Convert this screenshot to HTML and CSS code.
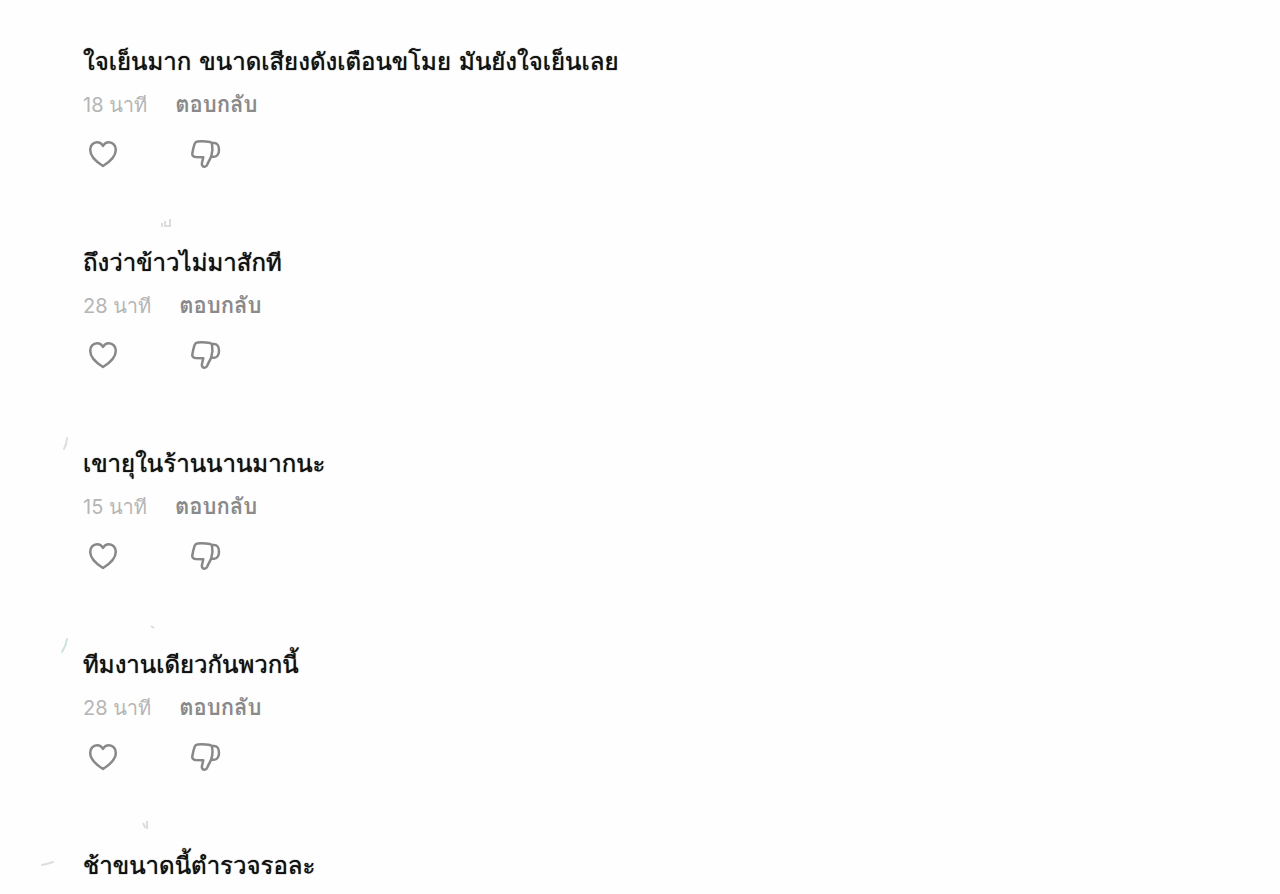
FILE: index.html
```html
<!DOCTYPE html>
<html lang="th">
<head>
<meta charset="utf-8">
<meta name="viewport" content="width=device-width, initial-scale=1">
<title>ความคิดเห็น</title>
<link rel="stylesheet" href="styles.css">
</head>
<body>
<svg class="symbols" aria-hidden="true">
  <symbol id="heart" viewBox="0 0 32 32"><path d="M16 28C12 25.500 3.200 19.500 3.200 11.700C3.200 7.500 6.200 4.300 10 4.300C12.700 4.300 14.800 5.800 16 8C17.200 5.800 19.300 4.300 22 4.300C25.800 4.300 28.800 7.500 28.800 11.700C28.800 19.500 20 25.500 16 28Z"/></symbol>
  <symbol id="dislike" viewBox="0 0 32 32"><path d="M8.500 3.500Q15 3 21 4Q22.700 4.300 23 6C23.800 10 23.500 14.500 22.300 18C21.300 21 19.500 23.500 18.300 26.500C17.500 28.300 16.500 29 15.200 28.800C13.300 28.500 12.500 26.700 13 24.700L14.300 19.300L6.500 19C4.300 18.800 3 17.500 3.300 15.500Q4 10.500 5.600 5.800Q6.300 3.700 8.500 3.500Z"/><path d="M22.800 5H25C28 5 30 7.700 30 11.700C30 16 28 18.700 25 18.700H22.200"/></symbol>
</svg>
<main class="comments">
  <article class="comment">
    <div class="avatar"></div>
    <div class="body">
      <div class="author"></div>
      <p class="text">ใจเย็นมาก ขนาดเสียงดังเตือนขโมย มันยังใจเย็นเลย</p>
      <div class="meta"><time>18 นาที</time><button class="reply" type="button">ตอบกลับ</button></div>
      <div class="actions"><button class="icon" type="button" aria-label="ถูกใจ"><svg><use href="#heart"/></svg></button><button class="icon" type="button" aria-label="ไม่ชอบ"><svg><use href="#dislike"/></svg></button></div>
    </div>
  </article>
  <article class="comment">
    <div class="avatar"></div>
    <div class="body">
      <div class="author"><svg class="trace" viewBox="0 0 100 20"><path d="M79 10v4M82 8v5h5V6"/></svg></div>
      <p class="text">ถึงว่าข้าวไม่มาสักที</p>
      <div class="meta"><time>28 นาที</time><button class="reply" type="button">ตอบกลับ</button></div>
      <div class="actions"><button class="icon" type="button" aria-label="ถูกใจ"><svg><use href="#heart"/></svg></button><button class="icon" type="button" aria-label="ไม่ชอบ"><svg><use href="#dislike"/></svg></button></div>
    </div>
  </article>
  <article class="comment">
    <div class="avatar"><svg viewBox="0 0 56 56"><path d="M54 24Q54 30 51 35"/></svg></div>
    <div class="body">
      <div class="author"></div>
      <p class="text">เขายุในร้านนานมากนะ</p>
      <div class="meta"><time>15 นาที</time><button class="reply" type="button">ตอบกลับ</button></div>
      <div class="actions"><button class="icon" type="button" aria-label="ถูกใจ"><svg><use href="#heart"/></svg></button><button class="icon" type="button" aria-label="ไม่ชอบ"><svg><use href="#dislike"/></svg></button></div>
    </div>
  </article>
  <article class="comment">
    <div class="avatar"><svg class="mint" viewBox="0 0 56 56"><path d="M54 24Q53 31 49 37"/></svg></div>
    <div class="body">
      <div class="author"><svg class="trace" viewBox="0 0 100 20"><path d="M68 11l3 2"/></svg></div>
      <p class="text">ทีมงานเดียวกันพวกนี้</p>
      <div class="meta"><time>28 นาที</time><button class="reply" type="button">ตอบกลับ</button></div>
      <div class="actions"><button class="icon" type="button" aria-label="ถูกใจ"><svg><use href="#heart"/></svg></button><button class="icon" type="button" aria-label="ไม่ชอบ"><svg><use href="#dislike"/></svg></button></div>
    </div>
  </article>
  <article class="comment">
    <div class="avatar"><svg viewBox="0 0 56 56"><path d="M29 49Q34 48 40 46"/></svg></div>
    <div class="body">
      <div class="author"><svg class="trace" viewBox="0 0 100 20"><path d="M60 7l2 4 2 1V5"/></svg></div>
      <p class="text">ช้าขนาดนี้ตำรวจรอละ</p>
    </div>
  </article>
</main>
</body>
</html>
```
FILE: styles.css
```css
* { box-sizing: border-box; }
body {
  margin: 0;
  background: #fefefe;
  color: #111;
  font-family: Inter, Loma, "Noto Sans Thai", sans-serif;
}
.symbols { position: absolute; width: 0; height: 0; }
.comments { padding-top: 12px; }
.comment {
  display: grid;
  grid-template-columns: 56px 1fr;
  column-gap: 14px;
  padding-left: 13px;
  padding-bottom: 41px;
}
.avatar { width: 56px; height: 56px; border-radius: 50%; }
.avatar svg { display: block; width: 56px; height: 56px; fill: none; stroke: #ddd; stroke-width: 2; stroke-linecap: round; }
.avatar .mint { stroke: #cfe3dd; }
.author { height: 20px; }
.trace { display: block; width: 100px; height: 20px; fill: none; stroke: #ddd; stroke-width: 2; }
.text { margin: 10px 0 0; font-family: Loma, "Noto Sans Thai", sans-serif; font-size: 24px; line-height: 40px; text-shadow: 0 0 1px #111; }
.meta { display: flex; align-items: center; gap: 28px; height: 46px; font-size: 20px; line-height: 32px; color: #b5b5b5; }
.reply {
  padding: 0;
  border: 0;
  background: none;
  color: #8a8a8a;
  font: bold 22px/32px Loma, "Noto Sans Thai", sans-serif;
}
.actions { display: flex; gap: 70px; padding: 10px 4px 2px; }
.icon { display: block; padding: 0; border: 0; background: none; color: #888; }
.icon svg { display: block; width: 32px; height: 32px; fill: none; stroke: currentColor; stroke-width: 2.500; stroke-linejoin: round; }
```
